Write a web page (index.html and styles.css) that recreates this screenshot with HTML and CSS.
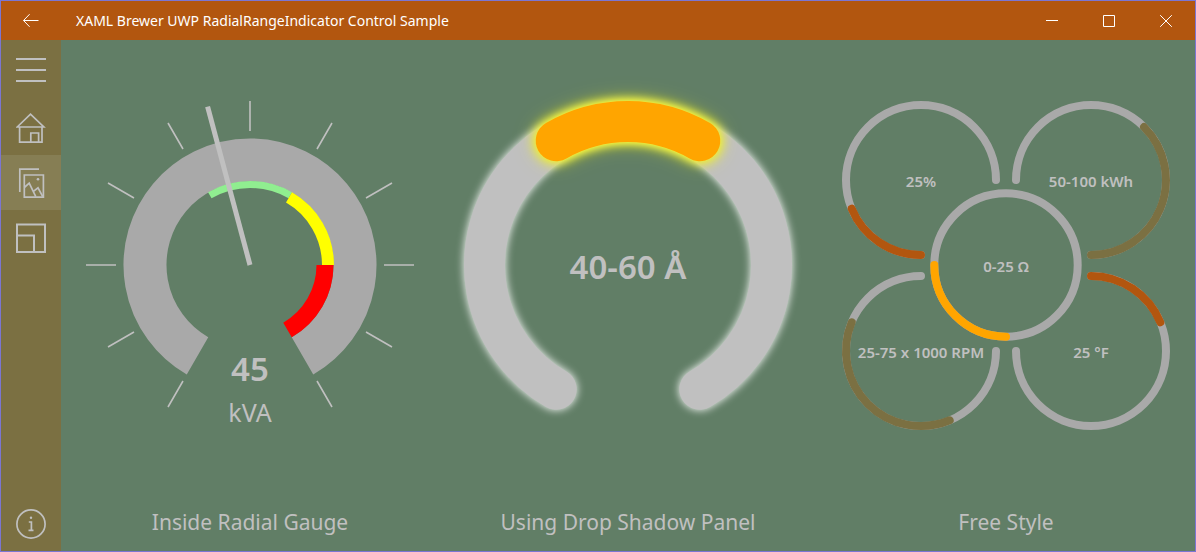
FILE: index.html
```html
<!DOCTYPE html>
<html lang="en">
<head>
<meta charset="utf-8">
<title>XAML Brewer UWP RadialRangeIndicator Control Sample</title>
<link rel="stylesheet" href="styles.css">
</head>
<body>
<div class="window">
  <header class="titlebar">
    <button class="back" type="button" aria-label="Back">
      <svg width="16" height="16" viewBox="0 0 16 16"><path d="M.5 7.5H15.5M6.6 1.2.5 7.5l6.1 6.3"/></svg>
    </button>
    <h1 class="title">XAML Brewer UWP RadialRangeIndicator Control Sample</h1>
    <button class="caption-button" type="button" aria-label="Minimize">
      <svg width="12" height="12" viewBox="0 0 12 12"><path d="M0 5.5h12"/></svg>
    </button>
    <button class="caption-button" type="button" aria-label="Maximize">
      <svg width="12" height="12" viewBox="0 0 12 12"><path d="M.5.5h11v11H.5z"/></svg>
    </button>
    <button class="caption-button" type="button" aria-label="Close">
      <svg width="12" height="12" viewBox="0 0 12 12"><path d="M.2.2l11.6 11.6M11.8.2.2 11.8"/></svg>
    </button>
  </header>

  <nav class="sidebar" aria-label="Main">
    <button class="nav-item menu" type="button" aria-label="Menu">
      <svg class="icon" viewBox="0 0 30 30"><path d="M0 4h30M0 15h30M0 26h30"/></svg>
    </button>
    <button class="nav-item" type="button" aria-label="Home">
      <svg class="icon thin" viewBox="0 0 30 30"><path d="M1.2 14 14.5 1.2 27.8 14zM3.6 14V29.2H26V14M14.8 29.2V20h7.8v9.2"/></svg>
    </button>
    <button class="nav-item selected" type="button" aria-label="Gallery" aria-current="page">
      <svg class="icon thin" viewBox="0 0 30 30"><path d="M3.8 24V1.2H23M8.3 7H27.4V29.2H8.3z"/><path d="M8.3 19.5 13.2 15.2 19.8 28.6M16.8 23.8 22 19.8 26.8 28.6"/><circle cx="22" cy="11.3" r="1.3"/></svg>
    </button>
    <button class="nav-item" type="button" aria-label="Layout">
      <svg class="icon" viewBox="0 0 30 30"><path d="M1 1.5H29V29H1zM1 12.5H18V29"/></svg>
    </button>
    <button class="nav-item about" type="button" aria-label="About">
      <svg class="icon thin" viewBox="0 0 30 30"><circle class="outline" cx="15" cy="15" r="14.1"/><circle cx="15" cy="8.7" r="1.2"/><path d="M12.8 13h2.6v8.2M12.5 21.4h5"/></svg>
    </button>
  </nav>

  <main class="gallery">
    <figure class="panel">
      <div class="dial">
        <svg class="gauge" viewBox="0 0 328 328">
          <path class="scale" d="M111.5 254.9A105 105 0 1 1 216.5 254.9"/>
          <path class="range green" d="M123.8 94.3A80.5 80.5 0 0 1 204.3 94.3"/>
          <path class="range yellow" d="M203 96.4A78 78 0 0 1 242 164"/>
          <path class="range red" d="M239 164A75 75 0 0 1 201.5 229"/>
          <path class="ticks" d="M164 0V30M82 22l15 26M22 82l26 15M0 164H30M22 246l26-15M82 306l15-26M246 22l-15 26M306 82l-26 15M328 164H298M306 246l-26-15M246 306l-15-26"/>
          <path class="needle" d="M164 164 121.6 5.6"/>
          <text class="value" x="164" y="280">45</text>
          <text class="unit" x="164" y="321">kVA</text>
        </svg>
      </div>
      <figcaption class="label">Inside Radial Gauge</figcaption>
    </figure>

    <figure class="panel">
      <div class="dial">
        <svg class="gauge" viewBox="0 0 328 328">
          <path class="ring glow-white" d="M92.2 288.3A143.5 143.5 0 1 1 235.8 288.3"/>
          <path class="ring-range glow-yellow" d="M92.2 39.7A143.5 143.5 0 0 1 235.8 39.7"/>
          <text class="value" x="164" y="178">40-60 Å</text>
        </svg>
      </div>
      <figcaption class="label">Using Drop Shadow Panel</figcaption>
    </figure>

    <figure class="panel">
      <div class="dial">
        <svg class="gauge" viewBox="0 0 328 328">
          <g class="loop">
            <path d="M79 154A75 75 0 1 1 154 79"/>
            <path d="M174 79A75 75 0 1 1 249 154"/>
            <path d="M79 175A75 75 0 1 0 154 250"/>
            <path d="M249 175A75 75 0 1 1 174 250"/>
            <circle cx="164" cy="164" r="71.7"/>
            <path class="rust" d="M79 154A75 75 0 0 1 9.7 107.7"/>
            <path class="olive" d="M302 26A75 75 0 0 1 249 154"/>
            <path class="olive" d="M9.7 221.3A75 75 0 0 0 107.7 319.3"/>
            <path class="rust" d="M249 175A75 75 0 0 1 318.3 221.3"/>
            <path class="orange" d="M164 235.7A71.7 71.7 0 0 1 92.3 164"/>
          </g>
          <text class="small" x="79" y="86">25%</text>
          <text class="small" x="249" y="86">50-100 kWh</text>
          <text class="small" x="164" y="171">0-25 Ω</text>
          <text class="small" x="79" y="257">25-75 x 1000 RPM</text>
          <text class="small" x="249" y="257">25 °F</text>
        </svg>
      </div>
      <figcaption class="label">Free Style</figcaption>
    </figure>
  </main>
</div>
</body>
</html>
```
FILE: styles.css
```css
:root {
  --rust: #b2560f;
  --olive: #7b7042;
  --green: #617e66;
  --silver: #c0c0c0;
  --gray: #a9a9a9;
}

* {
  box-sizing: border-box;
}

body {
  margin: 0;
  font-family: "Noto Sans", "Open Sans", sans-serif;
}

.window {
  display: grid;
  grid-template: 39px 1fr / 60px 1fr;
  min-height: 100vh;
  border: 1px solid #7b76d2;
  background: var(--green);
  color: var(--silver);
}

button {
  display: flex;
  align-items: center;
  justify-content: center;
  padding: 0;
  border: 0;
  background: none;
  color: inherit;
}

.titlebar {
  grid-column: 1 / -1;
  display: flex;
  padding-right: 1px;
  background: var(--rust);
  color: #fff;
}

.titlebar svg {
  fill: none;
  stroke: currentColor;
  stroke-width: 1;
}

.back {
  width: 60px;
}

.title {
  flex: 1;
  margin: 0;
  padding-left: 15px;
  font-size: 14px;
  font-weight: 400;
  line-height: 39px;
}

.caption-button {
  width: 57px;
}

.sidebar {
  display: flex;
  flex-direction: column;
  background: var(--olive);
}

.nav-item {
  height: 55px;
}

.nav-item.menu {
  height: 60px;
}

.nav-item.selected {
  background: #867e54;
}

.nav-item.about {
  margin-top: auto;
}

.icon {
  width: 30px;
  height: 30px;
  fill: none;
  stroke: currentColor;
  stroke-width: 2;
}

.icon.thin {
  stroke-width: 1.7;
}

.icon circle {
  fill: currentColor;
  stroke: none;
}

.icon .outline {
  fill: none;
  stroke: currentColor;
}

.gallery {
  display: grid;
  grid-template-columns: repeat(3, 1fr);
}

.panel {
  display: grid;
  grid-template-rows: 1fr 62px;
  margin: 0;
}

.dial {
  display: flex;
  align-items: center;
  padding: 0 25px;
}

.gauge {
  width: 100%;
  overflow: visible;
  fill: none;
}

.label {
  padding-top: 4px;
  font-size: 21px;
  line-height: 58px;
  text-align: center;
}

.scale {
  stroke: var(--gray);
  stroke-width: 43;
}

.range.green {
  stroke: #90ee90;
  stroke-width: 7;
}

.range.yellow {
  stroke: #ff0;
  stroke-width: 12;
}

.range.red {
  stroke: #f00;
  stroke-width: 17;
}

.ticks {
  stroke: var(--silver);
  stroke-width: 1.6;
}

.needle {
  stroke: var(--silver);
  stroke-width: 5;
}

.ring,
.ring-range {
  stroke: var(--silver);
  stroke-width: 41;
  stroke-linecap: round;
}

.ring-range {
  stroke: #ffa500;
}

.glow-white {
  filter: drop-shadow(0 0 4px #fff);
}

.glow-yellow {
  filter: drop-shadow(0 0 6px #ff0) drop-shadow(0 0 8px rgba(255, 255, 0, 0.5));
}

.loop {
  stroke: var(--gray);
  stroke-width: 8;
  stroke-linecap: round;
}

.rust {
  stroke: var(--rust);
}

.olive {
  stroke: var(--olive);
}

.orange {
  stroke: #ffa500;
}

.gauge text {
  fill: var(--silver);
  text-anchor: middle;
}

.value {
  font-size: 33px;
  font-weight: 600;
}

.unit {
  font-size: 25px;
}

.small {
  font-size: 15px;
  font-weight: 600;
}
```
